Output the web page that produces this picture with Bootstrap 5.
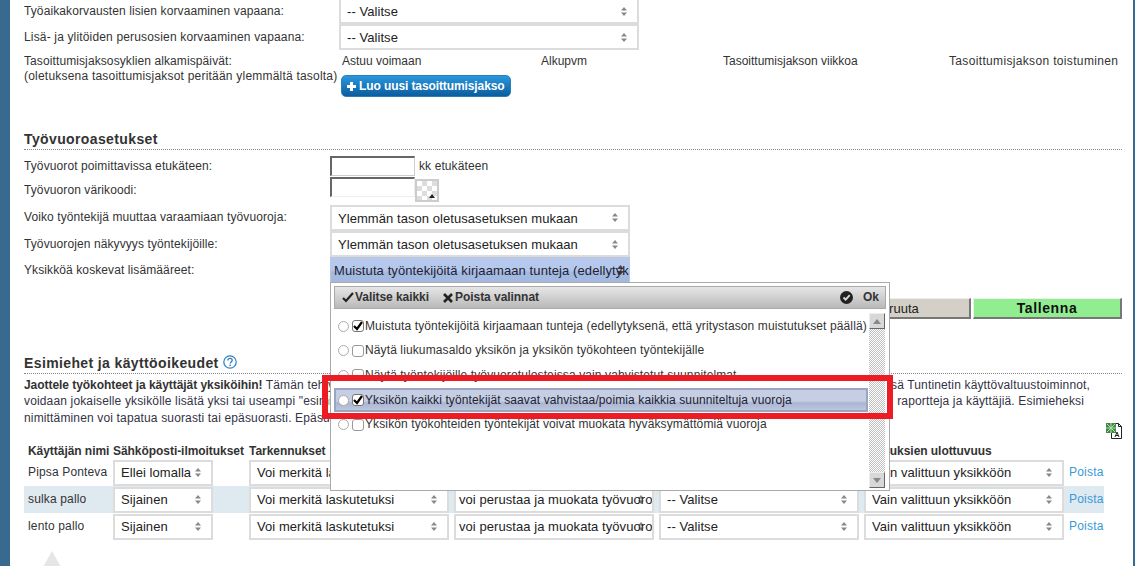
<!DOCTYPE html>
<html lang="fi">
<head>
<meta charset="utf-8">
<title>Työvuoroasetukset</title>
<link href="https://cdn.jsdelivr.net/npm/bootstrap@5.3.0/dist/css/bootstrap.min.css" rel="stylesheet">
<style>
html,body{height:566px;overflow:hidden;background:#fff}
body{font-family:"Liberation Sans",Arial,sans-serif;font-size:12px;color:#333;line-height:13px;letter-spacing:.1px}
.shell{height:566px;background:#386a8f;padding:0 2px 0 10px;position:relative}
.sheet{background:#fff;height:566px;padding:0 10px 0 14px;overflow:hidden;position:relative}
.flowtop{margin-top:-2px}
.setrow{height:26px}
.setrow-b{height:27px}
.setrow-c{height:26px}
.lab1{width:315px;flex:none}
.lab2{width:306px;flex:none}
.wide1{letter-spacing:.16px}
.wide2{letter-spacing:.21px}
.sel{flex:none;width:300px;height:26px;border:2px solid #dcdcdc;border-radius:0;font-family:"Liberation Sans",Arial,sans-serif;font-size:13px;letter-spacing:.06px;line-height:18px;color:#222;padding:3px 18px 1px 6px;
background-color:#fff;background-image:url("data:image/svg+xml,%3Csvg xmlns='http://www.w3.org/2000/svg' width='6' height='9'%3E%3Cpath d='M3 0 6 3.500H0zM3 9 0 5.500h6z' fill='%23888'/%3E%3C/svg%3E");background-repeat:no-repeat;background-position:right 10px center;background-size:6px 9px}
.sel:focus{box-shadow:none;border-color:#dcdcdc}
.levrow{margin-top:1px;height:46px;padding-top:3px}
.lev-lab{line-height:14.5px}
.levhead{width:779px;margin-left:3px;margin-top:1px;letter-spacing:0}
.levcol1{width:199px}.levcol2{width:182px}.levcol3{width:226px}.levcol4{width:172px;letter-spacing:.34px}
.bluebtn{margin-top:7px;margin-left:2px;width:170px;height:22px;background:linear-gradient(#2a97dc,#0a5d9f);color:#fff;font-weight:700;font-size:12px;letter-spacing:-.1px;line-height:20px;border:1px solid #2a7fb8;border-radius:5px;padding:0 0 0 5px;text-align:left;white-space:nowrap}
.bluebtn:hover{background:linear-gradient(#2a97dc,#0a5d9f);color:#fff}
.plusmark{margin-right:3px}
.head1{font-size:14px;font-weight:700;color:#333;letter-spacing:.38px;line-height:17px;height:19px;border-bottom:1px dotted #888;width:1098px}
.sec1{margin-top:34px}
.txt{width:85px;height:20px;border:1px solid #ccc;border-top:2px solid #666;border-left:2px solid #666;background:#fff;flex:none;padding:0}
.txt2{border-right-color:#eee;border-bottom-color:#eee}
.inrow1{height:22px;margin-top:5px}
.inrow2{height:27px}
.inlab{padding-top:7px}
.pick{width:24px;height:23px;margin-top:2px;border:2px solid #ccc;flex:none;position:relative;background:repeating-conic-gradient(#ddd 0 25%,#fff 0 50%) 0 0/10px 10px}
.pick::after{content:"";position:absolute;right:2px;bottom:2px;border:3px solid transparent;border-bottom:4px solid #222;border-top:0}
.multi{background-color:#aec2e6;padding:0 0 0 3px;color:#223;border:1px solid #b9c6de;background-image:url("data:image/svg+xml,%3Csvg xmlns='http://www.w3.org/2000/svg' width='7' height='10'%3E%3Cpath d='M3.500 0 7 4H0zM3.500 10 0 6h7z' fill='%23444'/%3E%3C/svg%3E"),linear-gradient(#b6c9ec 50%,#a3b9e0 60%)}
.multi-box{overflow:hidden;white-space:nowrap;text-overflow:clip;font-size:13px;letter-spacing:.1px;line-height:25px;height:26px;background-size:7px 10px,auto;background-position:right 5px center,0 0}
.actrow{margin-top:15px;height:21px;width:1098px;gap:2px}
.actbtn{width:149px;height:21px;padding:0;border:1px solid;border-width:1px 2px 2px 1px;border-color:#eee #777 #777 #eee;border-radius:0;font-size:13px;letter-spacing:0;line-height:17px;color:#222;background:#d4d0c8}
.savebtn{background:#90ee90;font-weight:700;font-size:14px;letter-spacing:.6px;color:#111}
.sec2{margin-top:36px;width:1098px}
.helpi{margin-left:4px;vertical-align:-1px}
.para{margin-top:3px;font-size:12px;line-height:16.4px;width:1066px;color:#334;letter-spacing:.15px}
.para b{color:#333;letter-spacing:-.05px}
.pe-six{padding-right:6px}
.xlrow{width:1098px;height:22px;margin-top:-3px}
.tbl-h{font-weight:700;height:14px;width:1080px;letter-spacing:-.05px}
.cname{width:89px;padding-left:4px;flex:none;letter-spacing:.15px}
.tbl-h .cname{letter-spacing:-.05px}
.cmail{width:136px;flex:none}
.cref{width:205px;flex:none}
.cperm{width:205px;flex:none}
.cmisc{width:205px;flex:none}
.cext{width:205px;flex:none}
.tbl-r{height:27px;width:1080px}
.tbl-r .sel{height:26px;width:200px;padding:2px 18px 2px 6px}
.tbl-r .cmail .sel{width:100px}
.tbl-r .cperm .sel{padding-left:3px;padding-right:0;background-position:right 8px center}
.tbl-r.alt{background:#dfe9f0}
.del{color:#3a9ad9;text-decoration:none;font-size:12px;letter-spacing:.2px}
.triup{width:0;height:0;border:9px solid transparent;border-bottom:16px solid #e6e6e6;border-top:0;margin:11px 0 0 19px}
.drop{position:absolute;left:320px;top:282px;width:560px;height:209px;background:#fff;border:1px solid #aaa;padding:3px 3px 0 3px}
.drophead{height:23px;background:linear-gradient(#e6e6e6,#b9b9b9);border:1px solid #aaa;font-size:12px;font-weight:700;letter-spacing:-.05px;color:#333;padding:0 6px 0 7px}
.drophead svg{flex:none}
.gap1{margin-right:1px}
.gap2{margin-right:2px}
.gap3{margin-right:14px}
.gap4{margin-right:10px}
.optlist{position:relative;height:178px;padding-top:5px;letter-spacing:.115px}
.optrow{height:24.6px;width:534px;padding-left:3px;color:#333;white-space:nowrap;overflow:hidden;font-size:12px;margin-top:0;border:1px solid transparent}
.optrow.on{background:linear-gradient(#c5cee2 55%,#aab6d2 65%,#bcc6dc);border:2px solid #9aa5bf;padding-left:2px;color:#223}
.rad{width:11px;height:11px;margin:0 3px 0 0;flex:none;border-color:#aaa}
.chk{width:12px;height:12px;margin:0 1px 0 0;flex:none;border-radius:0;border-color:#999}
.chk:checked{background-color:#fff;border-color:#777;background-image:url("data:image/svg+xml,%3Csvg xmlns='http://www.w3.org/2000/svg' viewBox='0 0 12 12'%3E%3Cpath d='M2 6l3 3 5-7' fill='none' stroke='%23000' stroke-width='2.200'/%3E%3C/svg%3E");background-size:12px}
.rad:checked,.chk:focus,.rad:focus{box-shadow:none}
.sbar{position:absolute;right:1px;top:4px;width:16px;height:175px;background:repeating-conic-gradient(#c0c0c0 0 25%,#fff 0 50%) 0 0/2px 2px}
.sbtn{position:absolute;left:0;width:16px;height:16px;background:#d8d8d8;border:1px solid;border-color:#eee #666 #666 #eee}
.sbtn::after{content:"";position:absolute;left:3px;border:4px solid transparent}
.sup{top:0}.sup::after{top:5px;border-bottom:5px solid #888;border-top:0}
.sdn{bottom:0}.sdn::after{top:5px;border-top:5px solid #888;border-bottom:0}
.redbox{position:absolute;left:312px;top:375px;width:571px;height:44px;border:6px solid #ed1c24;pointer-events:none}
</style>
</head>
<body>
<div class="shell">
<div class="sheet">
  <div class="flowtop">
    <div class="d-flex align-items-center setrow-c"><div class="lab1">Työaikakorvausten lisien korvaaminen vapaana:</div><select class="form-select sel"><option>-- Valitse</option></select></div>
    <div class="d-flex align-items-center setrow"><div class="lab1 wide1">Lisä- ja ylitöiden perusosien korvaaminen vapaana:</div><select class="form-select sel"><option>-- Valitse</option></select></div>
    <div class="d-flex levrow">
      <div class="lab1 lev-lab">Tasoittumisjaksosyklien alkamispäivät:<br><span class="wide2">(oletuksena tasoittumisjaksot peritään ylemmältä tasolta)</span></div>
      <div>
        <div class="d-flex levhead"><div class="levcol1">Astuu voimaan</div><div class="levcol2">Alkupvm</div><div class="levcol3">Tasoittumisjakson viikkoa</div><div class="levcol4 text-nowrap">Tasoittumisjakson toistuminen</div></div>
        <button type="button" class="btn bluebtn"><svg width="9" height="9" viewBox="0 0 9 9" class="plusmark"><path d="M3 0h3v3h3v3H6v3H3V6H0V3h3z" fill="#fff"/></svg>Luo uusi tasoittumisjakso</button>
      </div>
    </div>
    <div class="head1 sec1">Työvuoroasetukset</div>
    <div class="d-flex align-items-center inrow1"><div class="lab2">Työvuorot poimittavissa etukäteen:</div><input class="txt" type="text"><span class="ms-1">kk etukäteen</span></div>
    <div class="d-flex inrow2"><div class="lab2 inlab">Työvuoron värikoodi:</div><input class="txt txt2" type="text"><span class="pick"></span></div>
    <div class="d-flex align-items-center setrow-b"><div class="lab2">Voiko työntekijä muuttaa varaamiaan työvuoroja:</div><select class="form-select sel"><option>Ylemmän tason oletusasetuksen mukaan</option></select></div>
    <div class="d-flex align-items-center setrow"><div class="lab2">Työvuorojen näkyvyys työntekijöille:</div><select class="form-select sel"><option>Ylemmän tason oletusasetuksen mukaan</option></select></div>
    <div class="d-flex align-items-center setrow"><div class="lab2">Yksikköä koskevat lisämääreet:</div><div class="sel multi multi-box">Muistuta työntekijöitä kirjaamaan tunteja (edellytyksenä, että yritystason muistutukset päällä)</div></div>
    <div class="d-flex justify-content-end actrow"><button type="button" class="btn actbtn">Peruuta</button><button type="button" class="btn actbtn savebtn">Tallenna</button></div>
    <div class="head1 sec2">Esimiehet ja käyttöoikeudet<svg class="helpi" width="14" height="14" viewBox="0 0 14 14"><circle cx="7" cy="7" r="6.200" fill="#fff" stroke="#2f7fc0" stroke-width="1.200"/><path d="M4.900 5.400c0-1.300 1-2 2.200-2s2.100.8 2.100 1.900c0 1.700-2 1.600-2 3.200" fill="none" stroke="#2f7fc0" stroke-width="1.300"/><rect x="6.400" y="9.600" width="1.500" height="1.500" fill="#2f7fc0"/></svg></div>
    <div class="para">
      <div class="d-flex justify-content-between"><span><b>Jaottele työkohteet ja käyttäjät yksiköihin!</b> Tämän tehtyäsi</span><span>sä Tuntinetin käyttövaltuustoiminnot,</span></div>
      <div class="d-flex justify-content-between pe-six"><span>voidaan jokaiselle yksikölle lisätä yksi tai useampi "esimies"</span><span>raportteja ja käyttäjiä. Esimieheksi</span></div>
      <div><span>nimittäminen voi tapatua suorasti tai epäsuorasti. Epäsuora</span></div>
    </div>
    <div class="d-flex justify-content-end xlrow"><svg width="16" height="16" viewBox="0 0 16 16"><path d="M5.500 .5h7l3 3v12h-10z" fill="#fff" stroke="#222"/><path d="M12.500 .5v3h3" fill="none" stroke="#222"/><path d="M0 0h10v10H0z" fill="#3d8b3d"/><path d="M1 1l8 8M9 1L1 9M5 0v10M0 5h10" stroke="#b5d8b5" stroke-width="1"/><path d="M9 14l2-5 2 5M10 12.500h2" fill="none" stroke="#222"/></svg></div>
    <div class="d-flex tbl-h"><div class="cname text-nowrap">Käyttäjän nimi</div><div class="cmail text-nowrap">Sähköposti-ilmoitukset</div><div class="cref">Tarkennukset</div><div class="cperm">Oikeudet</div><div class="cmisc">Lisätiedot</div><div class="cext">Oikeuksien ulottuvuus</div></div>
    <div class="d-flex align-items-center tbl-r"><div class="cname">Pipsa Ponteva</div><div class="cmail"><select class="form-select sel"><option>Ellei lomalla</option></select></div><div class="cref"><select class="form-select sel"><option>Voi merkitä laskutetuksi</option></select></div><div class="cperm"><select class="form-select sel"><option>voi perustaa ja muokata työvuoroja</option></select></div><div class="cmisc"><select class="form-select sel"><option>-- Valitse</option></select></div><div class="cext"><select class="form-select sel"><option>Vain valittuun yksikköön</option></select></div><a class="del" href="#">Poista</a></div>
    <div class="d-flex align-items-center tbl-r alt"><div class="cname">sulka pallo</div><div class="cmail"><select class="form-select sel"><option>Sijainen</option></select></div><div class="cref"><select class="form-select sel"><option>Voi merkitä laskutetuksi</option></select></div><div class="cperm"><select class="form-select sel"><option>voi perustaa ja muokata työvuoroja</option></select></div><div class="cmisc"><select class="form-select sel"><option>-- Valitse</option></select></div><div class="cext"><select class="form-select sel"><option>Vain valittuun yksikköön</option></select></div><a class="del" href="#">Poista</a></div>
    <div class="d-flex align-items-center tbl-r"><div class="cname">lento pallo</div><div class="cmail"><select class="form-select sel"><option>Sijainen</option></select></div><div class="cref"><select class="form-select sel"><option>Voi merkitä laskutetuksi</option></select></div><div class="cperm"><select class="form-select sel"><option>voi perustaa ja muokata työvuoroja</option></select></div><div class="cmisc"><select class="form-select sel"><option>-- Valitse</option></select></div><div class="cext"><select class="form-select sel"><option>Vain valittuun yksikköön</option></select></div><a class="del" href="#">Poista</a></div>
    <div class="triup"></div>
  </div>

  <div class="drop">
    <div class="d-flex align-items-center drophead">
      <svg width="12" height="11" viewBox="0 0 12 11" class="gap1"><path d="M1 6l3 3 7-8" fill="none" stroke="#222" stroke-width="2.200"/></svg><span class="gap3">Valitse kaikki</span>
      <svg width="10" height="10" viewBox="0 0 10 10" class="gap2"><path d="M1 1l8 8M9 1l-8 8" fill="none" stroke="#222" stroke-width="2.600"/></svg><span>Poista valinnat</span>
      <svg width="13" height="13" viewBox="0 0 13 13" class="ms-auto gap4"><circle cx="6.500" cy="6.500" r="6.500" fill="#222"/><path d="M3.500 6.500l2.200 2.200 4-4.500" fill="none" stroke="#ddd" stroke-width="1.800"/></svg><span>Ok</span>
    </div>
    <div class="optlist">
      <div class="d-flex align-items-center optrow"><input class="form-check-input rad" type="radio" name="o"><input class="form-check-input chk" type="checkbox" checked>Muistuta työntekijöitä kirjaamaan tunteja (edellytyksenä, että yritystason muistutukset päällä)</div>
      <div class="d-flex align-items-center optrow"><input class="form-check-input rad" type="radio" name="o"><input class="form-check-input chk" type="checkbox">Näytä liukumasaldo yksikön ja yksikön työkohteen työntekijälle</div>
      <div class="d-flex align-items-center optrow"><input class="form-check-input rad" type="radio" name="o"><input class="form-check-input chk" type="checkbox">Näytä työntekijöille työvuorotulosteissa vain vahvistetut suunnitelmat</div>
      <div class="d-flex align-items-center optrow on"><input class="form-check-input rad" type="radio" name="o"><input class="form-check-input chk" type="checkbox" checked>Yksikön kaikki työntekijät saavat vahvistaa/poimia kaikkia suunniteltuja vuoroja</div>
      <div class="d-flex align-items-center optrow"><input class="form-check-input rad" type="radio" name="o"><input class="form-check-input chk" type="checkbox">Yksikön työkohteiden työntekijät voivat muokata hyväksymättömiä vuoroja</div>
      <div class="sbar"><span class="sbtn sup"></span><span class="sbtn sdn"></span></div>
    </div>
  </div>
  <div class="redbox"></div>
</div>
</div>
<script src="https://cdn.jsdelivr.net/npm/bootstrap@5.3.0/dist/js/bootstrap.bundle.min.js"></script>
</body>
</html>
